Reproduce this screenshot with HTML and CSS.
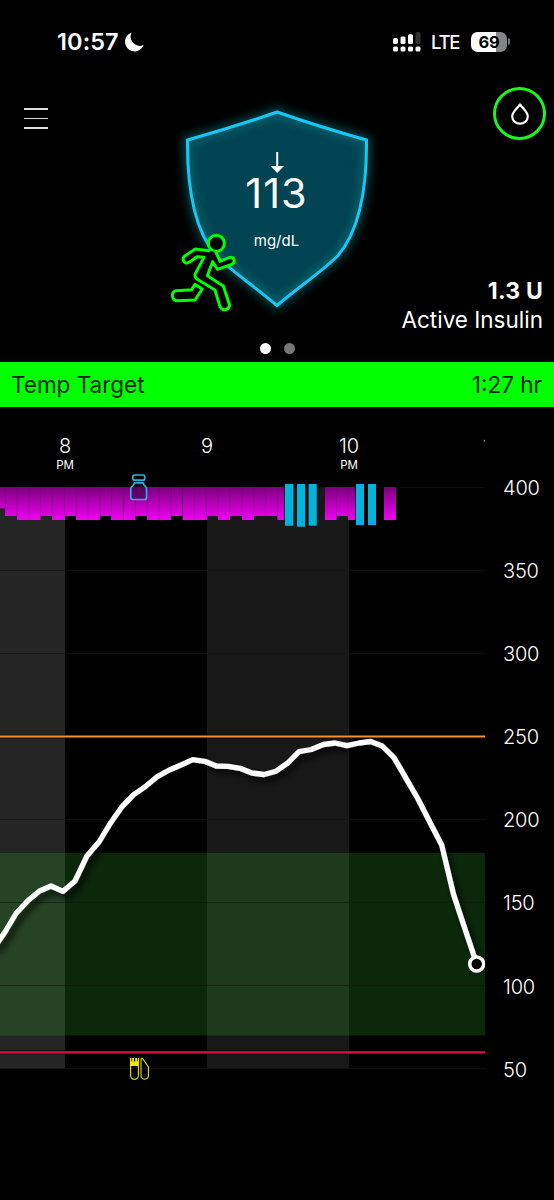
FILE: index.html
```html
<!DOCTYPE html>
<html lang="en">

	<head>
		<meta charset="UTF-8">
		<title>Glucose</title>
		<link rel="stylesheet" href="styles.css">
	</head>

	<body>
		<div class="status">
			<div class="status-left">
				<span class="time">10:57</span>
				<svg class="moon" width="19" height="20" viewBox="0 0 19 20">
					<path d="M6.500 0.700A9.600 9.600 0 1 0 18.600 13.100A9.300 9.300 0 0 1 6.500 0.700Z" fill="#fff" />
				</svg>
			</div>
			<div class="status-right">
				<svg width="28" height="20" viewBox="0 0 28 20" fill="#fff">
					<rect x="0" y="6" width="5" height="6" rx="1.5" />
					<rect x="7.5" y="4.5" width="5" height="7.5" rx="1.5" />
					<rect x="15" y="2.2" width="5" height="9.8" rx="1.5" />
					<rect x="22.5" y="0" width="5" height="12" rx="1.5" fill="#333" />
					<rect x="0" y="14.5" width="5" height="5" rx="1.5" />
					<rect x="7.5" y="14.5" width="5" height="5" rx="1.5" />
					<rect x="15" y="14.5" width="5" height="5" rx="1.5" />
					<rect x="22.5" y="14.5" width="5" height="5" rx="1.5" />
				</svg>
				<span class="lte">LTE</span>
				<div class="battery"><span>69</span></div>
				<div class="nub"></div>
			</div>
		</div>

		<div class="hero">
			<div class="hero-left">
				<div class="menu"><i></i><i></i><i></i></div>
			</div>
			<div class="hero-mid">
				<svg class="shield" width="230" height="225" viewBox="162 95 230 225">
					<defs>
						<filter id="glow" x="-20%" y="-20%" width="140%" height="140%">
							<feGaussianBlur stdDeviation="4.5" />
						</filter>
						<path id="shape" d="M277 112Q320 127 366.500 140C367 192 358 232 338 255.500C324 270 300 286 277 305.500C254 286 230 270 216 255.500C196 232 187 192 187.500 140Q234 127 277 112Z" />
					</defs>
					<use href="#shape" fill="#004352" />
					<use href="#shape" fill="none" stroke="#0a7a80" stroke-width="10" opacity=".5" filter="url(#glow)" />
					<use href="#shape" fill="none" stroke="#14c8fa" stroke-width="3" />
					<path d="M277.200 152V168" stroke="#fff" stroke-width="2" />
					<path d="M270.500 166H284L277.200 173Z" fill="#fff" />
					<text class="bg" x="276.500" y="207.500">113</text>
					<text class="unit" x="276.500" y="246">mg/dL</text>
					<!-- exercise -->
					<g class="runner" transform="translate(160 225) scale(.3333)">
						<circle cx="169" cy="55" r="24" />
						<path d="M147 77L106 72L75 92Q65 101 73 111Q80 118 90 110L111 95L132 97L106 146Q102 155 112 163L165 195L180 245Q186 257 197 254Q210 250 208 238L190 183L142 152L158 110L172 133L213 119Q225 114 222 104Q217 94 207 98L180 109L167 80" />
						<path d="M105 178L95 194L49 197Q37 200 37 211Q38 226 51 227L105 225L127 192Z" />
					</g>
				</svg>
				<div class="dots"><i class="on"></i><i></i></div>
			</div>
			<div class="hero-right">
				<div class="drop">
					<svg width="20" height="24" viewBox="0 0 20 24">
						<path d="M10 2.500C7.500 6 2.200 10 2.200 14.200A7.800 7.500 0 0 0 17.800 14.200C17.800 10 12.500 6 10 2.500Z" fill="none" stroke="#fff" stroke-width="2.200" stroke-linejoin="round" />
					</svg>
				</div>
				<div class="iob">
					<b>1.3 U</b>
					<span>Active Insulin</span>
				</div>
			</div>
		</div>

		<div class="banner">
			<span class="target">Temp Target</span>
			<span class="left">1:27 hr</span>
		</div>

		<div class="chart">
			<div class="main">
				<div class="hours">
					<div class="hour">8<small>PM</small></div>
					<div class="hour">9</div>
					<div class="hour">10<small>PM</small></div>
					<div class="hour">11</div>
				</div>
				<svg class="plot" width="485" height="620" viewBox="0 470 485 620">
					<defs>
						<linearGradient id="basal" gradientUnits="userSpaceOnUse" x1="0" y1="487" x2="0" y2="520">
							<stop offset="0" stop-color="#7c007e" />
							<stop offset="1" stop-color="#f000f2" />
						</linearGradient>
						<filter id="shadow" filterUnits="userSpaceOnUse" x="-20" y="720" width="520" height="280">
							<feDropShadow dx="4" dy="5" stdDeviation="3" flood-color="#000" flood-opacity=".75" />
						</filter>
					</defs>
					<!-- hour bands -->
					<rect x="0" y="487" width="65" height="581.500" fill="#252525" />
					<rect x="207" y="487" width="142" height="581.500" fill="#181818" />
					<!-- target range -->
					<rect x="0" y="853" width="485" height="182.500" fill="#2ca02c" fill-opacity=".25" />
					<path d="M0 487.500H485M0 570.500H485M0 653.500H485M0 819.500H485M0 902.500H485M0 985.500H485M0 1068.500H485" stroke="#141414" stroke-opacity=".6" />
					<!-- basal -->
					<path d="M0 487V508.500H5V516H17V520H40.500V516H52V520H65V516H76V520H100V516H111V520H135.500V516H147V520H171V516H182.500V520H207V516H218V520H230V516H242V520H254V516H277.300V520H284V487ZM325 487V520H336.500V516H348V520H355V487ZM384 487V520H396V487Z" fill="url(#basal)" />
					<path d="M5.500 487V508M17 487V516M29 487V520M40.500 487V516M52.500 487V516M64.500 487V516M76.500 487V516M88 487V520M100 487V516M111.500 487V516M135.500 487V516M147 487V516M159 487V520M171 487V516M194.500 487V520M206.500 487V516M218 487V516M230 487V516M242 487V516M254 487V516M265.500 487V516M277.500 487V516M336.500 487V516M348 487V516" stroke="#400040" stroke-opacity=".25" />
					<path d="M123.500 487V520M182.500 487V520" stroke="#500050" stroke-opacity=".8" />
					<g fill="#00b4dc">
						<rect x="285" y="484" width="8.300" height="41.700" />
						<rect x="297" y="484" width="8" height="42.700" />
						<rect x="308.700" y="484" width="8" height="41.700" />
						<rect x="356" y="484" width="8" height="41" />
						<rect x="368" y="484" width="8" height="41" />
					</g>
					<!-- vial -->
					<g fill="none" stroke="#1fb5dc" stroke-width="1.700">
						<rect x="132.800" y="475" width="12" height="5.200" rx="2" />
						<path d="M134.500 482.800H143Q143.500 485 145.500 486.500Q146.500 487.500 146.500 489V497.500Q146.500 499.500 144.500 499.500H133Q130.800 499.500 130.800 497.500V489Q130.800 487.500 132 486.500Q134 485 134.500 482.800Z" fill="#300040" fill-opacity=".5" />
					</g>
					<!-- alert lines -->
					<path d="M0 736.500H485" stroke="#000" stroke-opacity=".5" stroke-width="4" />
					<path d="M0 736.500H485" stroke="#f8912a" stroke-width="2" />
					<path d="M0 1052.300H485" stroke="#000" stroke-opacity=".5" stroke-width="4" />
					<path d="M0 1052.300H485" stroke="#dc143c" stroke-width="2.200" />
					<!-- meal -->
					<g fill="none" stroke="#d8d000" stroke-width="1.200">
						<path d="M130.600 1058.500V1075.500A3.900 3.900 0 0 0 138.400 1075.500V1058.500" />
						<path d="M130 1058V1066H139V1058H137.800V1061.500H137V1058H135.200V1061.500H134V1058H132.200V1061.500H131.400V1058Z" fill="#f0e800" stroke="none" />
						<path d="M141 1059.500V1075.500A3.700 3.700 0 0 0 148.400 1075.500V1067L142.500 1058.500Q141 1057.500 141 1059.500Z" />
					</g>
					<g filter="url(#shadow)">
						<polyline class="line" points="-6,948 5,932 16,913.500 28,900.500 39.500,891 51,886 63,891.300 75,881 86.700,856.300 99,842 110.700,822.700 122.300,806.300 133.700,794.700 145.700,786.300 157.700,776.300 169.300,770 181,765 192.700,759.700 204.700,761.300 216.300,766 228.300,766.300 240,768.300 252,773 264,774.500 276,771.200 287.700,763 299,751.700 311.300,749.500 323.300,744.500 335,743 347,745.700 359,743 370.700,741.500 382.300,746 394,757.700 406,778.300 418,799 430,822.500 441.700,845 453.500,894.300 465.300,930 476.700,964" />
					</g>
					<circle cx="476.700" cy="964" r="7" fill="#000" stroke="#fff" stroke-width="3.500" />
				</svg>
			</div>
			<div class="scale">
				<span>400</span>
				<span>350</span>
				<span>300</span>
				<span>250</span>
				<span>200</span>
				<span>150</span>
				<span>100</span>
				<span>50</span>
			</div>
		</div>
	</body>

</html>
```
FILE: styles.css
```css
* {
	padding: 0;
	margin: 0;
	box-sizing: border-box;
}

body {
	width: 554px;
	height: 1200px;
	background: #000;
	color: #fff;
	font-family: Inter, "Liberation Sans", sans-serif;
	overflow: hidden;
}

svg {
	display: block;
	flex: none;
}

.status {
	height: 83px;
	display: flex;
	justify-content: space-between;
	padding: 0 44px 0 57px;
}

.status-left,
.status-right {
	display: flex;
	align-items: center;
	height: 83px;
}

.time {
	width: 68px;
	font-size: 23.5px;
	font-weight: 600;
	letter-spacing: 0.1px;
}

.lte {
	width: 38px;
	padding-left: 10px;
	font-size: 18.5px;
	font-weight: 500;
	letter-spacing: -1.3px;
	margin-right: 2px;
}

.battery {
	width: 36px;
	height: 20px;
	margin-left: 10px;
	border-radius: 6.5px;
	background: linear-gradient(90deg, #fff 69%, #858585 69%);
	color: #000;
	font-size: 16.5px;
	font-weight: 700;
	line-height: 20px;
	text-align: center;
	letter-spacing: -0.3px;
}

.nub {
	width: 2px;
	height: 7px;
	margin-left: 1px;
	border-radius: 0 2px 2px 0;
	background: #777;
}

.hero {
	height: 279px;
	display: grid;
	grid-template-columns: 162px 230px 162px;
}

.menu {
	width: 24px;
	margin: 25px 0 0 24px;
	display: flex;
	flex-direction: column;
	gap: 8px;
}

.menu i {
	height: 1.5px;
	background: #ddd;
}

.hero-mid {
	padding-top: 12px;
}

.bg {
	font-size: 41.5px;
	letter-spacing: 1px;
	fill: #fff;
	text-anchor: middle;
}

.unit {
	font-size: 15px;
	fill: #fff;
	text-anchor: middle;
}

.runner {
	fill: #000;
	stroke: #0f0;
	stroke-width: 9;
	stroke-linejoin: round;
	stroke-linecap: round;
}

.dots {
	display: flex;
	justify-content: center;
	gap: 13px;
	margin-top: 23px;
}

.dots i {
	width: 11px;
	height: 11px;
	border-radius: 50%;
	background: #777;
}

.dots .on {
	background: #fff;
}

.hero-right {
	display: flex;
	flex-direction: column;
	align-items: flex-end;
	padding: 4px 8px 0 0;
}

.drop {
	width: 53px;
	height: 53px;
	border: 3px solid #1cf51c;
	border-radius: 50%;
	display: flex;
	justify-content: center;
	align-items: center;
}

.iob {
	display: flex;
	flex-direction: column;
	align-items: flex-end;
	padding-right: 3px;
	margin-top: 137px;
	font-size: 22.5px;
	line-height: 28.5px;
	white-space: nowrap;
}

.iob b {
	font-size: 23px;
	letter-spacing: 0.2px;
}

.banner {
	height: 45px;
	padding: 0 12px 0 11px;
	display: flex;
	justify-content: space-between;
	align-items: center;
	background: #0f0;
	color: #062806;
	font-size: 22.5px;
}

.chart {
	display: flex;
	height: 793px;
}

.main {
	width: 485px;
	overflow: hidden;
}

.hours {
	width: 568px;
	height: 63px;
	margin-left: -6px;
	padding-top: 27px;
	display: flex;
}

.hour {
	width: 142px;
	font-size: 20px;
	font-weight: 300;
	line-height: 24px;
	text-align: center;
}

.hour small {
	display: block;
	font-size: 11.5px;
	font-weight: 400;
	line-height: 14px;
}

.line {
	fill: none;
	stroke: #fff;
	stroke-width: 5.3;
	stroke-linejoin: round;
}

.scale {
	padding: 40px 0 0 18px;
	font-size: 20px;
	font-weight: 300;
	letter-spacing: -0.2px;
}

.scale span {
	display: block;
	height: 83.1px;
	line-height: 83.1px;
}
```
